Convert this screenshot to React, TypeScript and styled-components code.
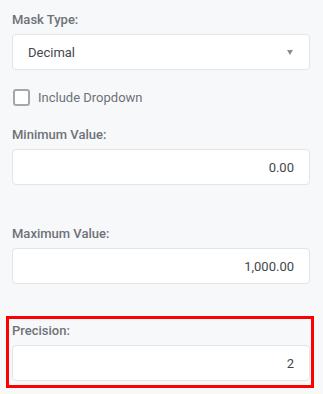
import styled, { createGlobalStyle } from 'styled-components'

const GlobalStyle = createGlobalStyle`
  html, body {
    margin: 0;
    padding: 0;
    background: #f7f8fa;
  }
  body {
    font-family: Roboto, "Liberation Sans", Arial, sans-serif;
    -webkit-font-smoothing: antialiased;
  }
  * {
    box-sizing: border-box;
  }
`

const Panel = styled.div`
  width: 323px;
  min-height: 394px;
  padding: 12px 13px 0 12px;
  display: flex;
  flex-direction: column;
`

const Field = styled.div<{ $gap?: number }>`
  display: flex;
  flex-direction: column;
  margin-top: ${(p) => p.$gap ?? 0}px;
`

const Highlight = styled.div`
  display: flex;
  flex-direction: column;
  margin: 32px -4px 0 -6px;
  padding: 4px 1px 4px 3px;
  border: 3px solid #ff0000;
`

const Label = styled.div`
  font-size: 13px;
  line-height: 16px;
  font-weight: 500;
  color: #6e7277;
  margin-bottom: 6px;
`

const InputBox = styled.div<{ $align?: 'left' | 'right' }>`
  height: 36px;
  background: #fff;
  border: 1px solid #e2e4e7;
  border-radius: 4px;
  display: flex;
  align-items: center;
  justify-content: ${(p) => (p.$align === 'right' ? 'flex-end' : 'space-between')};
  padding: 0 15px;
  font-size: 13px;
  color: #43474c;
`

const Caret = styled.span`
  width: 0;
  height: 0;
  border-left: 3.5px solid transparent;
  border-right: 3.5px solid transparent;
  border-top: 5px solid #8a8d91;
  margin-right: 1px;
`

const CheckRow = styled.label`
  display: flex;
  align-items: center;
  gap: 8px;
  margin-top: 19px;
  font-size: 13px;
  line-height: 17px;
  color: #6e7277;
`

const CheckBox = styled.span`
  width: 17px;
  height: 17px;
  border: 2px solid #a4a8ad;
  border-radius: 3px;
  background: #fff;
  margin-left: 1px;
`

export default function App() {
  return (
    <>
      <GlobalStyle />
      <Panel>
        <Field>
          <Label>Mask Type:</Label>
          <InputBox>
            <span>Decimal</span>
            <Caret />
          </InputBox>
        </Field>

        <CheckRow>
          <CheckBox />
          <span>Include Dropdown</span>
        </CheckRow>

        <Field $gap={21}>
          <Label>Minimum Value:</Label>
          <InputBox $align="right">0.00</InputBox>
        </Field>

        <Field $gap={41}>
          <Label>Maximum Value:</Label>
          <InputBox $align="right">1,000.00</InputBox>
        </Field>

        <Highlight>
          <Label>Precision:</Label>
          <InputBox $align="right">2</InputBox>
        </Highlight>
      </Panel>
    </>
  )
}
